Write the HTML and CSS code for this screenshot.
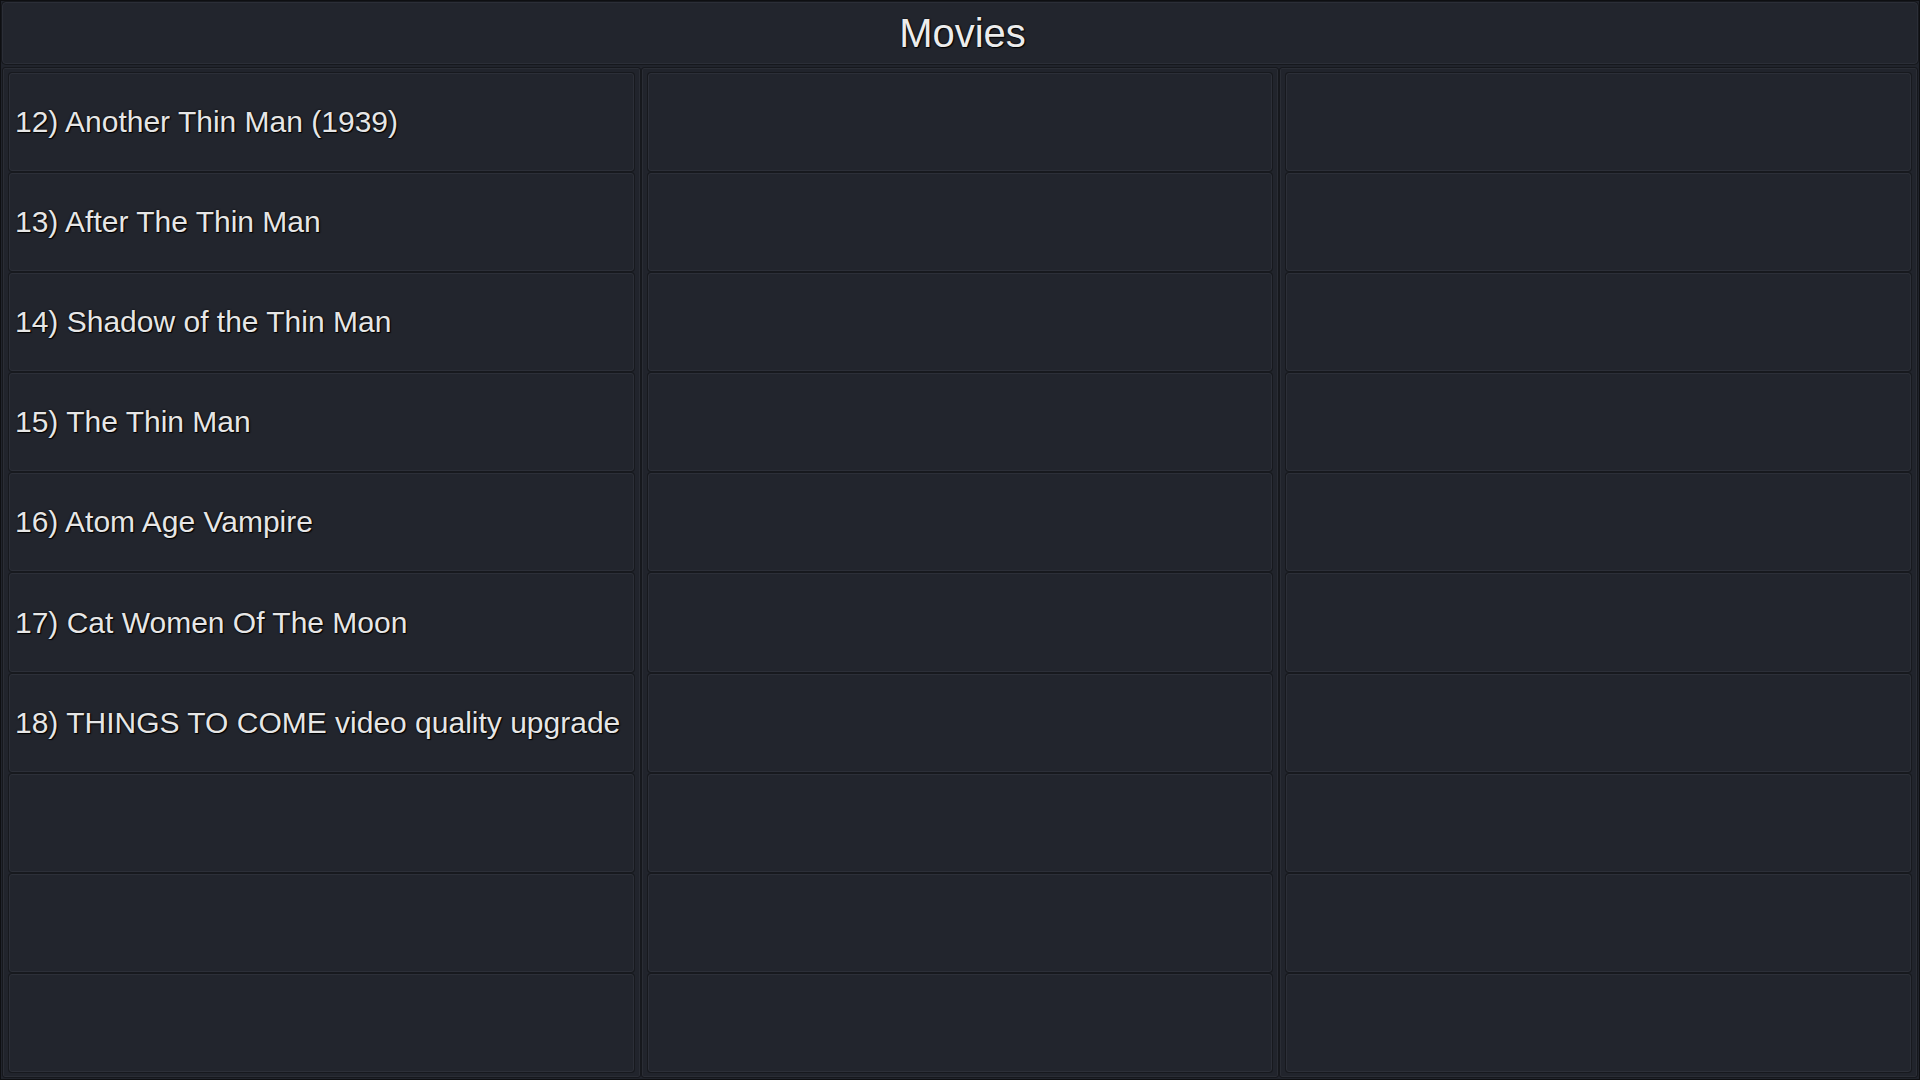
FILE: index.html
```html
<!DOCTYPE html>
<html>
<head>
<meta charset="utf-8">
<link rel="stylesheet" href="styles.css">
</head>
<body>
<div class="frame">
  <header class="header"><span class="title">Movies</span></header>
  <main class="board">
    <section class="col">
      <div class="cell"><span class="label">12) Another Thin Man (1939)</span></div>
      <div class="cell"><span class="label">13) After The Thin Man</span></div>
      <div class="cell"><span class="label">14) Shadow of the Thin Man</span></div>
      <div class="cell"><span class="label">15) The Thin Man</span></div>
      <div class="cell"><span class="label">16) Atom Age Vampire</span></div>
      <div class="cell"><span class="label">17) Cat Women Of The Moon</span></div>
      <div class="cell"><span class="label">18) THINGS TO COME video quality upgrade</span></div>
      <div class="cell"></div>
      <div class="cell"></div>
      <div class="cell"></div>
    </section>
    <section class="col">
      <div class="cell"></div><div class="cell"></div><div class="cell"></div><div class="cell"></div><div class="cell"></div>
      <div class="cell"></div><div class="cell"></div><div class="cell"></div><div class="cell"></div><div class="cell"></div>
    </section>
    <section class="col">
      <div class="cell"></div><div class="cell"></div><div class="cell"></div><div class="cell"></div><div class="cell"></div>
      <div class="cell"></div><div class="cell"></div><div class="cell"></div><div class="cell"></div><div class="cell"></div>
    </section>
  </main>
</div>
</body>
</html>
```
FILE: styles.css
```css
html, body {
  margin: 0;
  padding: 0;
  background: #15171b;
}
.frame {
  box-sizing: border-box;
  width: 1920px;
  height: 1080px;
  border: 1px solid #0e0f12;
  padding: 1px;
  background: #21242c;
  display: flex;
  flex-direction: column;
  font-family: "Liberation Sans", Arial, sans-serif;
}
.header {
  box-sizing: border-box;
  height: 62px;
  flex: none;
  border: 1px solid #2b2e37;
  border-radius: 4px;
  box-shadow: 0 0 0 1px #16181d;
  background: #22252d;
  display: flex;
  align-items: center;
  justify-content: center;
  padding-left: 5px;
}
.title {
  font-size: 40px;
  color: #ececec;
  text-shadow: 0 0 2px #000, 1px 1px 1px #000;
  margin-top: 0;
}
.board {
  flex: 1;
  margin-top: 3px;
  display: grid;
  grid-template-columns: repeat(3, 1fr);
  min-height: 0;
}
.col {
  box-sizing: border-box;
  border: 1px solid #16181d;
  box-shadow: inset 0 0 0 1px #2a2d35;
  border-radius: 3px;
  padding: 5px 6px;
  display: flex;
  flex-direction: column;
  gap: 2px;
  min-height: 0;
}
.cell {
  flex: 1;
  box-sizing: border-box;
  border: 1px solid #2c2f38;
  border-radius: 3px;
  box-shadow: 0 0 0 1px #17191e;
  background: #22252d;
  display: flex;
  align-items: center;
  padding-left: 5px;
  min-height: 0;
}
.label {
  font-size: 30px;
  color: #e6e6e6;
  text-shadow: 0 0 2px #000, 1px 1px 1px #000;
  white-space: nowrap;
}
```
